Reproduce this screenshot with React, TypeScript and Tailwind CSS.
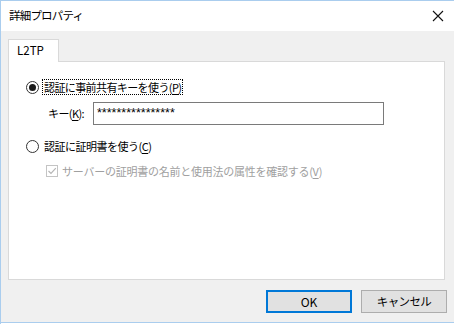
const font = { fontFamily: '"Noto Sans CJK JP", "Noto Sans", sans-serif' };

function Radio({ checked }: { checked?: boolean }) {
  return (
    <span className="flex h-[13px] w-[13px] shrink-0 items-center justify-center rounded-full border border-[#333333] bg-white">
      {checked && <span className="h-[7px] w-[7px] rounded-full bg-[#1a1a1a]" />}
    </span>
  );
}

function Mn({ k }: { k: string }) {
  return (
    <>
      (<span className="underline underline-offset-2">{k}</span>)
    </>
  );
}

export default function App() {
  return (
    <div
      className="flex h-[324px] w-[454px] flex-col overflow-hidden border-l border-t border-[#aacdee] bg-[#f0f0f0] text-[11px] text-black"
      style={font}
    >
      <div className="flex h-[30px] shrink-0 items-center justify-between bg-white pl-[8px] pr-[9px]">
        <span className="text-[11.5px] tracking-[-0.8px]">詳細プロパティ</span>
        <svg width="12" height="12" viewBox="0 0 12 12" className="mr-[1px]">
          <path d="M1 1 L11 11 M11 1 L1 11" stroke="#111" strokeWidth="1.1" />
        </svg>
      </div>

      <div className="flex flex-col pl-[7px] pr-[9px] pt-[8px]">
        <div className="relative z-10 -mb-px flex h-[23px] w-[51px] items-center border border-b-0 border-[#d9d9d9] bg-white pl-[8px] text-[11.5px]">
          L2TP
        </div>
        <div className="flex h-[219px] flex-col border border-[#d9d9d9] bg-white pl-[17px]">
          <div className="mt-[17px] flex h-[16px] items-center">
            <Radio checked />
            <span className="ml-[3px] flex h-[16px] items-center border border-dotted border-black px-[1px] tracking-[-0.6px]">
              認証に事前共有キーを使う<Mn k="P" />
            </span>
          </div>
          <div className="mt-[7px] flex items-center">
            <span className="ml-[22px] w-[45px] tracking-[-0.6px]">
              キー<Mn k="K" />:
            </span>
            <div
              className="flex h-[23px] w-[291px] items-center border border-[#7a7a7a] bg-white pl-[3px] text-[12.5px]"
              style={{ fontFamily: '"Liberation Sans", sans-serif' }}
            >
              ****************
            </div>
          </div>
          <div className="mt-[13px] flex h-[16px] items-center">
            <Radio />
            <span className="ml-[5px] tracking-[-0.5px]">
              認証に証明書を使う<Mn k="C" />
            </span>
          </div>
          <div className="mt-[9px] flex h-[16px] items-center pl-[20px]">
            <span className="flex h-[12px] w-[12px] items-center justify-center border border-[#c4c4c4] bg-white">
              <svg width="10" height="10" viewBox="0 0 10 10">
                <path d="M1.5 5 L4 7.5 L8.8 2.2" fill="none" stroke="#b5b5b5" strokeWidth="1.2" />
              </svg>
            </span>
            <span className="ml-[4px] tracking-[-0.25px] text-[#a0a0a0]">
              サーバーの証明書の名前と使用法の属性を確認する<Mn k="V" />
            </span>
          </div>
        </div>
        <div className="mt-[10px] flex justify-end gap-[9px]">
          <button className="flex h-[23px] w-[86px] items-center justify-center border-2 border-[#0078d7] bg-[#e1e1e1] text-[12px]">
            OK
          </button>
          <button className="-mr-[2px] flex h-[23px] w-[86px] items-center justify-center border border-[#adadad] bg-[#e1e1e1] text-[11.5px] tracking-[-0.6px]">
            キャンセル
          </button>
        </div>
      </div>
      <div className="mt-auto h-[2px] shrink-0 border-t border-[#aacdee] bg-white" />
    </div>
  );
}
